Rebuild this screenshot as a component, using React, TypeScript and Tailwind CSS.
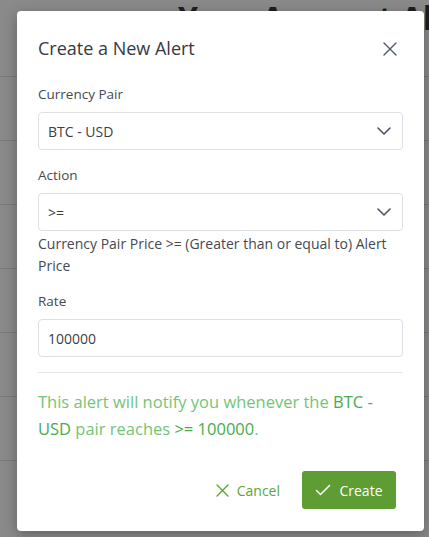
import { useState } from "react";

const font = { fontFamily: '"Open Sans", "Noto Sans", Arial, sans-serif' };

function Chevron() {
  return (
    <svg width="16" height="10" viewBox="0 0 16 10" fill="none" stroke="#4b5563" strokeWidth="1.6" strokeLinecap="round" strokeLinejoin="round">
      <path d="M2 2l6 6 6-6" />
    </svg>
  );
}

function SelectBox({ value }: { value: string }) {
  return (
    <div className="flex h-[38px] items-center justify-between rounded-[4px] border border-[#dcdfe6] bg-white pl-[9px] pr-[10px] text-[14px] text-[#3a3f47]">
      <span>{value}</span>
      <Chevron />
    </div>
  );
}

export default function App() {
  const [rate] = useState("100000");

  return (
    <div className="relative h-[537px] w-[429px] overflow-hidden bg-[#8a8a8a]" style={font}>
      {/* page behind the overlay */}
      <div className="absolute left-[178px] top-[-2px] whitespace-nowrap text-[32px] font-bold leading-[40px] text-[#1e1e1e]">Your Account Alerts</div>
      <div className="absolute inset-x-0 top-[76px] flex flex-col">
        {[0, 1, 2, 3, 4, 5, 6].map((i) => (
          <div key={i} className="h-[64px] border-t border-[#7a7a7a]" />
        ))}
      </div>

      {/* modal */}
      <div className="absolute left-[17px] top-[11px] w-[407px] rounded-[4px] bg-white px-[21px] shadow-[0_4px_14px_rgba(0,0,0,0.3)]">
        <div className="flex items-center justify-between pt-[24px]">
          <h2 className="text-[18px] text-[#333a44]">Create a New Alert</h2>
          <button type="button" className="mr-[6px] text-[#505a66]">
            <svg width="14" height="14" viewBox="0 0 14 14" stroke="currentColor" strokeWidth="1.4" strokeLinecap="round">
              <path d="M1 1l12 12M13 1L1 13" />
            </svg>
          </button>
        </div>

        <div className="mt-[22px] text-[13.5px] leading-[21px] text-[#444a52]">Currency Pair</div>
        <div className="mt-[7px]">
          <SelectBox value="BTC - USD" />
        </div>

        <div className="mt-[15px] text-[13.5px] leading-[21px] text-[#444a52]">Action</div>
        <div className="mt-[7px]">
          <SelectBox value=">=" />
        </div>
        <p className="mt-[2px] text-[14px] leading-[22px] text-[#444a52]">
          Currency Pair Price &gt;= (Greater than or equal to) Alert Price
        </p>

        <div className="mt-[14px] text-[13.5px] leading-[21px] text-[#444a52]">Rate</div>
        <div className="mt-[7px] flex h-[38px] items-center rounded-[4px] border border-[#dcdfe6] px-[9px] text-[14px] text-[#3a3f47]">
          {rate}
        </div>

        <div className="mt-[15px] border-t border-[#e4e4e4]" />

        <p className="mt-[15px] text-[16.5px] leading-[27px] text-[#74c476]">
          This alert will notify you whenever the <span className="text-[#47ad4c]">BTC - USD</span> pair reaches{" "}
          <span className="text-[#47ad4c]">&gt;= 100000</span>.
        </p>

        <div className="mt-[29px] flex items-center justify-end gap-[22px] pb-[22px] pr-[7px]">
          <button type="button" className="flex items-center gap-[8px] text-[14px] text-[#5aa83a]">
            <svg width="13" height="13" viewBox="0 0 13 13" stroke="currentColor" strokeWidth="1.4" strokeLinecap="round">
              <path d="M1 1l11 11M12 1L1 12" />
            </svg>
            Cancel
          </button>
          <button type="button" className="flex h-[38px] w-[94px] items-center justify-center gap-[8px] rounded-[3px] bg-[#5e9c34] text-[14px] text-white">
            <svg width="16" height="12" viewBox="0 0 16 12" fill="none" stroke="currentColor" strokeWidth="1.5" strokeLinecap="round" strokeLinejoin="round">
              <path d="M1.5 6.5l4 4 9-9" />
            </svg>
            Create
          </button>
        </div>
      </div>
    </div>
  );
}
